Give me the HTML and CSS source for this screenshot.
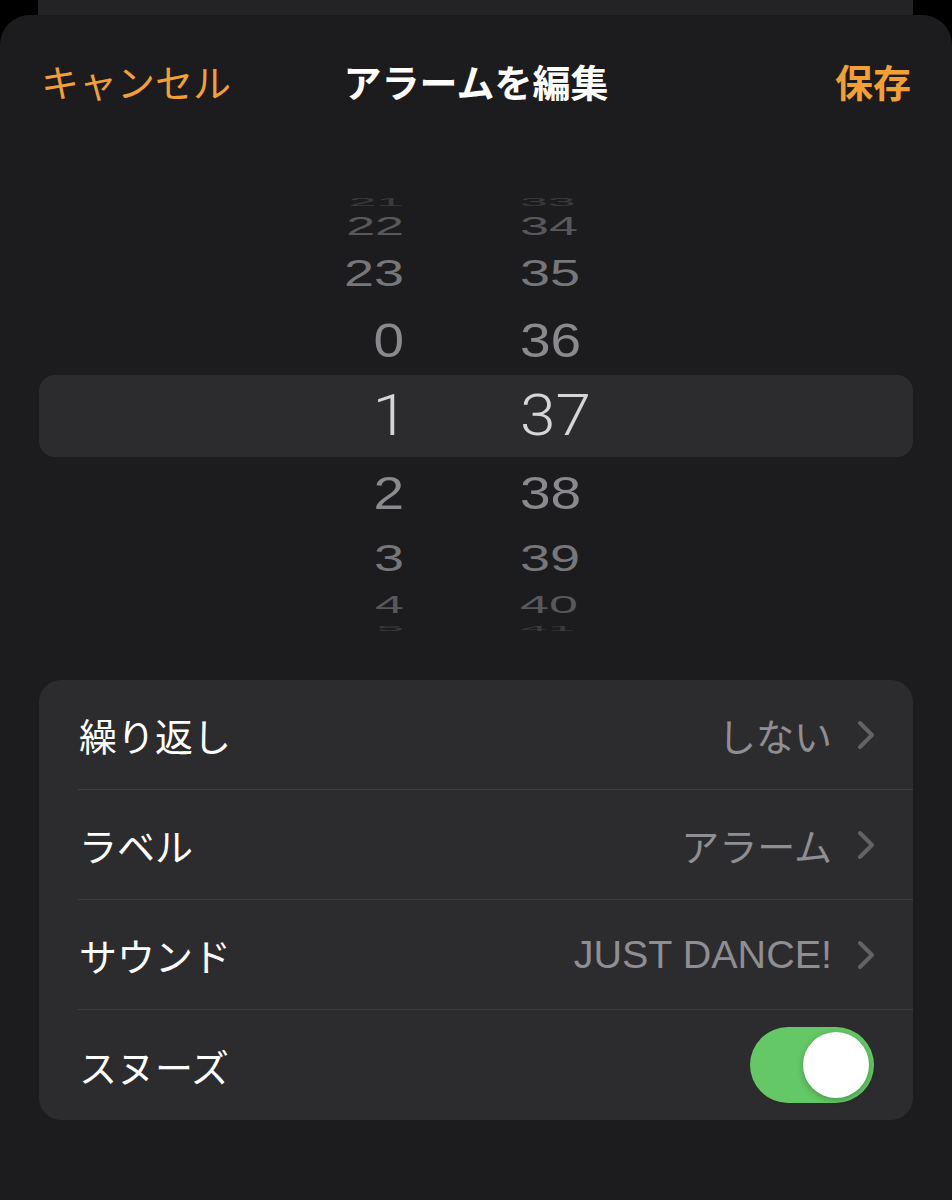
FILE: index.html
```html
<!DOCTYPE html>
<html lang="ja">
<head>
<meta charset="utf-8">
<title>アラームを編集</title>
<link rel="stylesheet" href="styles.css">
</head>
<body>
<div class="backcard"></div>
<div class="sheet">
  <header class="header">
    <span class="btn cancel">キャンセル</span>
    <span class="title">アラームを編集</span>
    <span class="btn save">保存</span>
  </header>

  <div class="picker">
    <div class="prow r1"><span class="h">21</span><span class="m">33</span></div>
    <div class="prow r2"><span class="h">22</span><span class="m">34</span></div>
    <div class="prow r3"><span class="h">23</span><span class="m">35</span></div>
    <div class="prow r4"><span class="h">0</span><span class="m">36</span></div>
    <div class="prow r5 sel"><span class="h">1</span><span class="m">37</span></div>
    <div class="prow r6"><span class="h">2</span><span class="m">38</span></div>
    <div class="prow r7"><span class="h">3</span><span class="m">39</span></div>
    <div class="prow r8"><span class="h">4</span><span class="m">40</span></div>
    <div class="prow r9"><span class="h">5</span><span class="m">41</span></div>
  </div>

  <div class="card">
    <div class="row">
      <span class="label">繰り返し</span>
      <span class="value">しない</span>
      <svg class="chev" viewBox="0 0 20 32" width="20" height="32"><path d="M4 4 L16 16 L4 28"/></svg>
    </div>
    <div class="row">
      <span class="label">ラベル</span>
      <span class="value">アラーム</span>
      <svg class="chev" viewBox="0 0 20 32" width="20" height="32"><path d="M4 4 L16 16 L4 28"/></svg>
    </div>
    <div class="row">
      <span class="label">サウンド</span>
      <span class="value latin">JUST DANCE!</span>
      <svg class="chev" viewBox="0 0 20 32" width="20" height="32"><path d="M4 4 L16 16 L4 28"/></svg>
    </div>
    <div class="row last">
      <span class="label">スヌーズ</span>
      <span class="toggle on"><span class="knob"></span></span>
    </div>
  </div>
</div>
</body>
</html>
```

FILE: styles.css
```css
* { box-sizing: border-box; }

html, body {
  margin: 0;
  padding: 0;
  background: #000;
}

body {
  width: 952px;
  height: 1200px;
  overflow: hidden;
  font-family: "Liberation Sans", "Noto Sans CJK JP", sans-serif;
  color: #fff;
}

.backcard {
  height: 15px;
  margin: 0 39px 0 38px;
  background: #232325;
}

.sheet {
  background: #1c1c1e;
  border-radius: 30px 30px 0 0;
  height: 1185px;
}

/* header */
.header {
  display: grid;
  grid-template-columns: 1fr auto 1fr;
  align-items: center;
  padding: 46px 41px 0;
  height: 92px;
  font-size: 38px;
  line-height: 46px;
}

.btn { color: #f2a033; }
.cancel { justify-self: start; }
.save { justify-self: end; font-weight: 700; }
.title { font-weight: 700; color: #fff; }

/* picker */
.picker {
  margin-top: 88px;
  display: flex;
  flex-direction: column;
}

.prow {
  display: grid;
  grid-template-columns: 365px 1fr;
  grid-template-rows: minmax(0, 1fr);
  column-gap: 116px;
  align-items: center;
  margin: 0 39px;
  font-family: "Liberation Sans", sans-serif;
}

.prow span {
  display: inline-block;
  line-height: 1;
  align-self: unsafe center;
}

.prow .h { justify-self: end; text-align: right; }
.prow .m { justify-self: start; text-align: left; }

.r1 { height: 16px; font-size: 50px; color: #3a3a3d; }
.r1 span { transform: scaleY(0.2); }
.r2 { height: 30px; font-size: 52px; color: #58585b; }
.r2 span { transform: scaleY(0.48); }
.r3 { height: 64px; font-size: 54px; color: #77777b; }
.r3 span { transform: scaleY(0.7); }
.r4 { height: 70px; font-size: 55px; color: #8a8a8e; }
.r4 span { transform: scaleY(0.89); }

.r5 {
  height: 82px;
  font-size: 64px;
  color: #d6d6da;
  background: #2c2c2e;
  border-radius: 16px;
  font-family: "Roboto", "Liberation Sans", sans-serif;
  font-weight: 300;
}
.r5 span { transform: scaleY(0.9); }
.r5 .h { margin-right: -4px; }

.r6 { height: 72px; font-size: 55px; color: #8a8a8e; }
.r6 span { transform: scaleY(0.84); }
.r7 { height: 58px; font-size: 54px; color: #77777b; }
.r7 span { transform: scaleY(0.7); }
.r8 { height: 36px; font-size: 52px; color: #58585b; }
.r8 span { transform: scaleY(0.46); }
.r9 { height: 12px; font-size: 50px; color: #3a3a3d; }
.r9 span { transform: scaleY(0.14); }

/* settings card */
.card {
  margin: 45px 39px 0;
  background: #2c2c2e;
  border-radius: 22px;
  overflow: hidden;
}

.row {
  display: flex;
  align-items: center;
  height: 110px;
  margin-left: 39px;
  padding-left: 1px;
  padding-right: 39px;
  border-bottom: 1px solid #3d3d40;
  font-size: 38px;
}

.row.last { border-bottom: none; }

.label {
  flex: 1;
  color: #fff;
}

.value {
  color: #8e8e93;
  margin-right: 24px;
}

.value.latin { font-size: 39.5px; }

.chev {
  display: block;
  margin-right: -2px;
}

.chev path {
  fill: none;
  stroke: #636367;
  stroke-width: 4;
  stroke-linecap: round;
  stroke-linejoin: round;
}

.toggle {
  position: relative;
  display: block;
  width: 124px;
  height: 76px;
  border-radius: 38px;
  background: #63c865;
}

.knob {
  position: absolute;
  top: 5px;
  right: 5px;
  width: 66px;
  height: 66px;
  border-radius: 50%;
  background: #fff;
  box-shadow: 0 2px 6px rgba(0, 0, 0, 0.25);
}
```
